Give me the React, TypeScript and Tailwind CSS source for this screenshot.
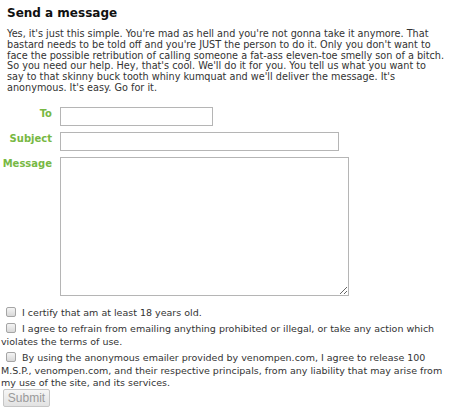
export default function App() {
  const agreements = [
    'I certify that am at least 18 years old.',
    'I agree to refrain from emailing anything prohibited or illegal, or take any action which violates the terms of use.',
    'By using the anonymous emailer provided by venompen.com, I agree to release 100 M.S.P., venompen.com, and their respective principals, from any liability that may arise from my use of the site, and its services.',
  ];

  return (
    <div className="w-[450px] h-[409px] bg-white text-[#222] font-['DejaVu_Sans',Verdana,sans-serif] overflow-hidden">
      {/* Heading + intro */}
      <div className="pl-[7px] pr-[5px] pt-[5px]">
        <h2 className="text-[12px] font-bold leading-[16px] text-[#111]">Send a message</h2>
        <p className="mt-[8px] text-[9.7px] leading-[10.8px] text-[#333]">
          Yes, it's just this simple. You're mad as hell and you're not gonna take it anymore. That bastard needs to be told off and you're JUST the person to do it. Only you don't want to face the possible retribution of calling someone a fat-ass eleven-toe smelly son of a bitch. So you need our help. Hey, that's cool. We'll do it for you. You tell us what you want to say to that skinny buck tooth whiny kumquat and we'll deliver the message. It's anonymous. It's easy. Go for it.
        </p>
      </div>

      {/* Form fields */}
      <div className="mt-[13px] grid grid-cols-[52px_1fr] gap-x-[8px] gap-y-[6px] text-[10px] font-bold text-[#77b843]">
        <label className="text-right pt-[1px] leading-[12px]">To</label>
        <input className="w-[153px] h-[19px] border border-[#b5b5b5] bg-white" />
        <label className="text-right pt-[1px] leading-[12px]">Subject</label>
        <input className="w-[279px] h-[19px] border border-[#b5b5b5] bg-white" />
        <label className="text-right pt-[1px] leading-[12px]">Message</label>
        <textarea className="w-[289px] h-[139px] border border-[#b5b5b5] bg-white resize" />
      </div>

      {/* Agreements */}
      <div className="mt-[11px] pl-[1px] flex flex-col gap-[4.2px] text-[9.5px] leading-[12.4px] text-[#333]">
        {agreements.map((text) => (
          <p key={text}>
            <input
              type="checkbox"
              className="appearance-none inline-block align-[-1px] w-[10px] h-[10px] ml-[5px] mr-[6px] rounded-[2px] border border-[#a5a5a5] bg-gradient-to-b from-[#f4f4f4] to-[#d8d8d8]"
            />
            {text}
          </p>
        ))}
      </div>

      <div className="flex pl-[3px] -mt-[1px]">
        <button
          disabled
          className="h-[18px] w-[47px] border border-[#c6c6c6] rounded-[2px] bg-gradient-to-b from-[#f6f6f6] to-[#e2e2e2] text-[12px] leading-[16px] text-[#9a9a9a] font-['Liberation_Sans',Arial,sans-serif]"
        >
          Submit
        </button>
      </div>
    </div>
  );
}
